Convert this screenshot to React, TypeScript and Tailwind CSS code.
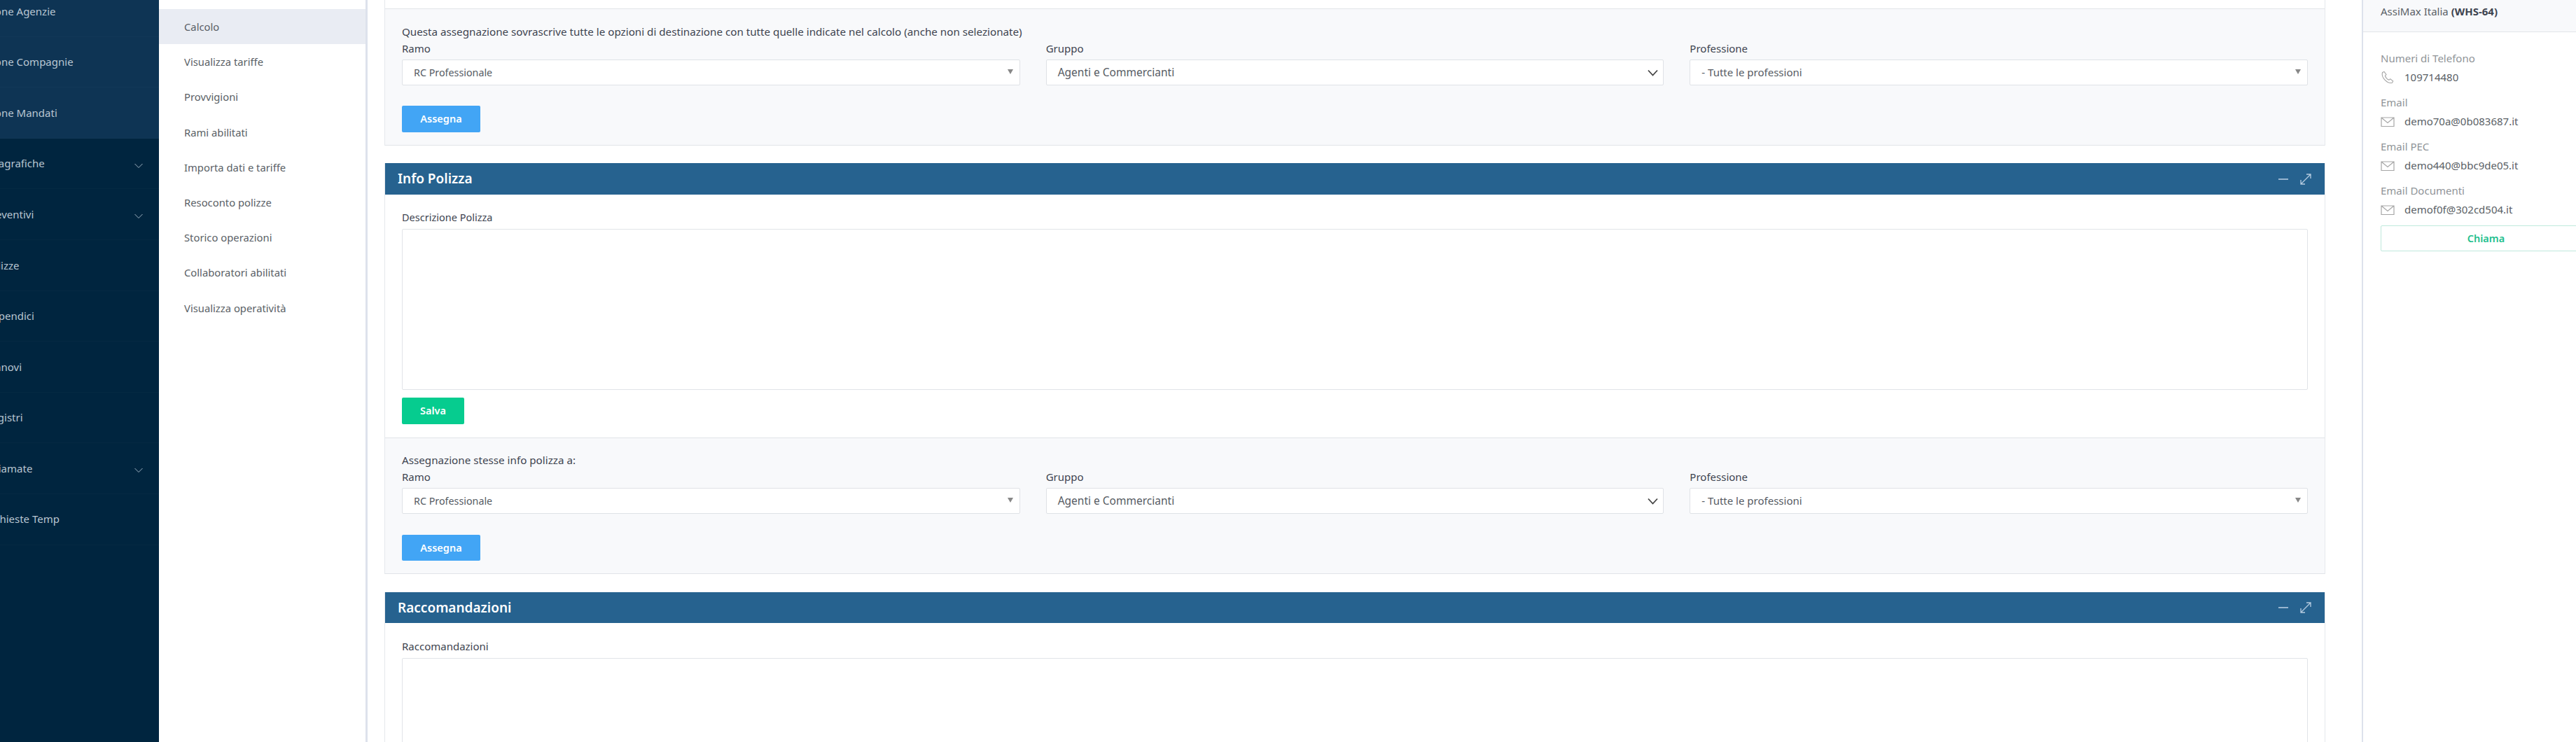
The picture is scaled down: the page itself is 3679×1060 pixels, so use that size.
import React from "react";

function Chevron() {
  return (
    <svg width="14" height="8" viewBox="0 0 14 8" fill="none" stroke="#9fb3c2" strokeWidth="1" className="shrink-0 mt-[6px]">
      <path d="M1.500 1l5.500 5.500L12.500 1" />
    </svg>
  );
}
const navTop = ["Gestione Agenzie", "Gestione Compagnie", "Gestione Mandati"];
const navBottom: [string, boolean][] = [
  ["Anagrafiche", true], ["Preventivi", true], ["Polizze", false], ["Appendici", false],
  ["Rinnovi", false], ["Registri", false], ["Chiamate", true], ["Richieste Temp", false],
];
const sub = ["Calcolo", "Visualizza tariffe", "Provvigioni", "Rami abilitati", "Importa dati e tariffe", "Resoconto polizze", "Storico operazioni", "Collaboratori abilitati", "Visualizza operatività"];

function NavRow({ label, chevron, inner }: { label: string; chevron?: boolean; inner?: boolean }) {
  return (
    <div className={`h-[72.6px] flex items-center pr-[22px] justify-between border-b border-[#ffffff05] text-[15px] text-[#b9c6d2] ${inner ? "pl-[17px]" : "pl-[39px]"}`}>
      <span className="whitespace-nowrap">{label}</span>
      {chevron && <Chevron />}
    </div>
  );
}

function SelectBox({ label, value, arrow, valueSize }: { label: string; value: string; arrow?: boolean; valueSize: string }) {
  return (
    <div className="flex-1 min-w-0">
      <div className="h-[24px] leading-[24px] text-[15px] text-[#3e4450] mb-[4px]">{label}</div>
      <div className="h-[37px] bg-white border border-[#dfe2e6] rounded-[2px] flex items-center justify-between pl-[16px] pr-[6px] text-[#565b63]">
        <span className={valueSize}>{value}</span>
        {arrow ? (
          <svg width="15" height="10" viewBox="0 0 15 10" fill="none" stroke="#444" strokeWidth="1.8" className="mr-[1px]"><path d="M1 1.500l6.500 7 6.500-7" /></svg>
        ) : (
          <span className="w-0 h-0 border-x-[4px] border-x-transparent border-t-[7px] border-t-[#888] mb-[3px] mr-[3px]" />
        )}
      </div>
    </div>
  );
}

function Footer({ text, top, btn }: { text: string; top: string; btn: string }) {
  return (
    <div className={`bg-[#f8f9fb] border-y border-[#e1e4e8] px-[24px] pb-[18px] ${top}`}>
      <div className="h-[24px] leading-[24px] text-[15.200px] text-[#3e4450] whitespace-nowrap">{text}</div>
      <div className="flex gap-[37px]">
        <SelectBox label="Ramo" value="RC Professionale" valueSize="text-[14.300px]" />
        <SelectBox label="Gruppo" value="Agenti e Commercianti" arrow valueSize="text-[15.500px]" />
        <SelectBox label="Professione" value="- Tutte le professioni" valueSize="text-[15px]" />
      </div>
      <button className={`block w-[112px] rounded-[2px] bg-[#42a5f5] text-white font-semibold text-[14.500px] ${btn}`}>Assegna</button>
    </div>
  );
}

function CardHeader({ title, height }: { title: string; height: string }) {
  return (
    <div className={`bg-[#26628f] flex items-center justify-between pl-[18px] pr-[19px] text-white ${height}`}>
      <span className="text-[19px] font-semibold">{title}</span>
      <div className="flex items-center gap-[16px] text-[#b5cbe0]">
        <svg width="16" height="16" viewBox="0 0 16 16" stroke="currentColor" strokeWidth="1.600" fill="none"><path d="M1 8h14" /></svg>
        <svg width="16" height="16" viewBox="0 0 16 16" stroke="currentColor" strokeWidth="1.300" fill="none"><path d="M1 15L15 1M9 1h6v6M1 9v6h6" /></svg>
      </div>
    </div>
  );
}

function Contact({ label, value, icon }: { label: string; value: string; icon: "phone" | "mail" }) {
  return (
    <div className="mb-[9px] text-[15px]">
      <div className="h-[27px] leading-[27px] text-[#909498]">{label}</div>
      <div className="h-[27px] flex items-center gap-[14px] text-[#5a5f66]">
        {icon === "phone" ? (
          <svg width="20" height="20" viewBox="0 0 20 20" fill="none" stroke="#a6a6a6" strokeWidth="1.100" className="shrink-0"><path d="M2.500 2.500l2.500-1 3 4-1.600 1.800c.8 2.400 3 4.800 5.500 6l1.800-1.600 4 3.200-1.200 2.400c-3.300.8-7.500-1-10.500-4.200C3 10 1.500 6 2.500 2.500z" /></svg>
        ) : (
          <svg width="20" height="16" viewBox="0 0 20 16" fill="none" stroke="#a6a6a6" strokeWidth="1.200" className="shrink-0"><path d="M1 2h18v12.500H1zM1 2l9 7.500L19 2" /></svg>
        )}
        <span>{value}</span>
      </div>
    </div>
  );
}

export default function App() {
  return (
    <div className="w-[3679px] h-[1060px] overflow-hidden bg-white flex text-[14px]" style={{ fontFamily: '"Noto Sans", "Open Sans", sans-serif' }}>
      <aside className="w-[227px] shrink-0 overflow-hidden bg-[#00253f] flex justify-end">
        <div className="w-[287px] shrink-0 -mt-[20px]">
          <div className="bg-[#0e3454]">{navTop.map((l) => <NavRow key={l} label={l} inner />)}</div>
          {navBottom.map(([l, c]) => <NavRow key={l} label={l} chevron={c} />)}
        </div>
      </aside>
      <nav className="w-[298px] shrink-0 border-r-[3px] border-[#dde2ec] pt-[13px] text-[#5a5f66] text-[14.800px]">
        {sub.map((s, i) => (
          <div key={s} className={`h-[50.200px] flex items-center pl-[36px] ${i === 0 ? "bg-[#e9ecf3]" : ""}`}>{s}</div>
        ))}
      </nav>
      <main className="w-[772px] flex-1 min-w-0 pl-[24px] pr-[52px]">
        <div className="border-x border-[#e5e8ec] -mt-[1px]">
          <div className="h-[13px]" />
          <Footer text="Questa assegnazione sovrascrive tutte le opzioni di destinazione con tutte quelle indicate nel calcolo (anche non selezionate)" top="pt-[20px]" btn="mt-[29px] h-[38px]" />
        </div>
        <div className="mt-[25px] border-x border-[#e5e8ec]">
          <CardHeader title="Info Polizza" height="h-[45px]" />
          <div className="px-[24px] pt-[20px] pb-[19px]">
            <div className="h-[24px] leading-[24px] text-[14.500px] text-[#3e4450] mb-[5px]">Descrizione Polizza</div>
            <div className="h-[230px] border border-[#e1e4e8] rounded-[2px]" />
            <button className="mt-[11px] block w-[89px] h-[38px] rounded-[2px] bg-[#06cc8f] text-white font-semibold text-[14.500px]">Salva</button>
          </div>
          <Footer text="Assegnazione stesse info polizza a:" top="pt-[19px]" btn="mt-[30px] h-[37px]" />
        </div>
        <div className="mt-[26px] border-x border-[#e5e8ec]">
          <CardHeader title="Raccomandazioni" height="h-[44px]" />
          <div className="px-[24px] pt-[21px]">
            <div className="h-[24px] leading-[24px] text-[15px] text-[#3e4450] mb-[5px]">Raccomandazioni</div>
            <div className="h-[300px] border border-[#e1e4e8] rounded-[2px]" />
          </div>
        </div>
      </main>
      <aside className="w-[306px] shrink-0 border-l-[2px] border-[#dde2ec]">
        <div className="h-[46px] bg-[#f8f9fb] border-b border-[#e1e4e8] pl-[25px] pt-[5px] text-[#5a5f66] text-[15px]">
          AssiMax Italia <b className="font-bold text-[#3e4450]">(WHS-64)</b>
        </div>
        <div className="w-[326px] pl-[25px] pt-[24px]">
          <Contact label="Numeri di Telefono" value="109714480" icon="phone" />
          <Contact label="Email" value="demo70a@0b083687.it" icon="mail" />
          <Contact label="Email PEC" value="demo440@bbc9de05.it" icon="mail" />
          <Contact label="Email Documenti" value="demof0f@302cd504.it" icon="mail" />
          <button className="mt-[6px] block w-[301px] h-[37px] border border-[#bfe9dc] rounded-[2px] bg-white text-[#1fc08e] font-semibold text-[14.500px]">Chiama</button>
        </div>
      </aside>
    </div>
  );
}
